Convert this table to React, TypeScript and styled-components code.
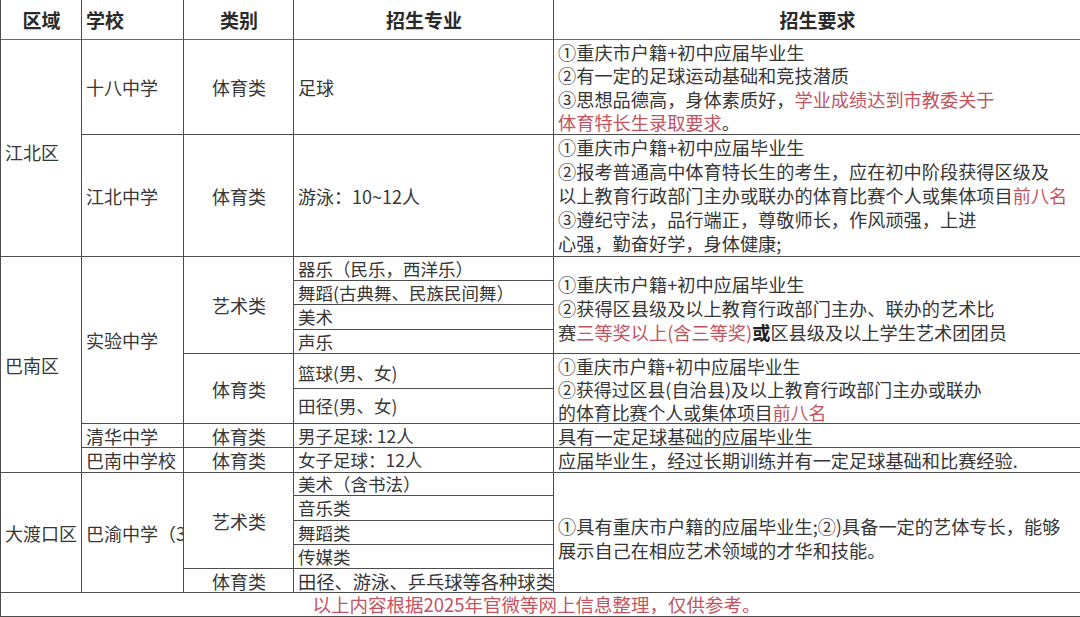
import React from 'react';
import styled, { createGlobalStyle } from 'styled-components';

const GlobalStyle = createGlobalStyle`
  html, body {
    margin: 0;
    padding: 0;
    background: #ffffff;
  }
  body {
    font-family: "Noto Sans CJK SC", "Noto Sans", sans-serif;
    color: #333333;
  }
`;

const ROW_HEIGHTS = [40, 95, 122, 24, 24, 25, 24, 35, 35, 24, 25, 23, 25, 24, 24, 24, 24];

const Sheet = styled.div`
  display: grid;
  width: 1080px;
  height: 617px;
  box-sizing: border-box;
  grid-template-columns: 81px 102px 110px 260px 1fr;
  grid-template-rows: ${ROW_HEIGHTS.map((h) => `${h}px`).join(' ')};
  border-left: 1px solid #4d4d4d;
  background: #ffffff;
  overflow: hidden;
`;

type CellProps = {
  $rows?: number;
  $align?: 'left' | 'center';
  $valign?: 'top' | 'center';
  $size?: number;
  $lh?: number;
  $last?: boolean;
  $pad?: number;
};

const Cell = styled.div<CellProps>`
  grid-row: span ${(p) => p.$rows ?? 1};
  display: flex;
  flex-direction: column;
  justify-content: ${(p) => (p.$valign === 'top' ? 'flex-start' : 'center')};
  align-items: ${(p) => (p.$align === 'center' ? 'center' : 'flex-start')};
  box-sizing: border-box;
  padding: ${(p) => p.$pad ?? 0}px 3px 0 4px;
  border-right: ${(p) => (p.$last ? 'none' : '1px solid #4d4d4d')};
  border-bottom: 1px solid #4d4d4d;
  font-size: ${(p) => p.$size ?? 18}px;
  line-height: ${(p) => p.$lh ?? 24}px;
  color: #363636;
  white-space: nowrap;
  overflow: hidden;
  min-width: 0;
`;

const HeadCell = styled(Cell)`
  font-weight: 700;
  font-size: 19px;
  color: #2a2a2a;
  border-bottom-color: #6a6a6a;
`;

const Requirement = styled(Cell)`
  font-size: ${(p) => p.$size ?? 18.2}px;
`;

const Line = styled.div`
  white-space: nowrap;
`;

const Red = styled.span`
  color: #c2545f;
`;

const Strong = styled.span`
  font-weight: 700;
  color: #1f1f1f;
`;

const Footer = styled.div`
  grid-column: span 5;
  display: flex;
  align-items: center;
  justify-content: center;
  padding-right: 8px;
  border-bottom: 1px solid #4d4d4d;
  font-size: 18.5px;
  line-height: 23px;
  color: #c2545f;
  white-space: nowrap;
`;

const App: React.FC = () => (
  <>
    <GlobalStyle />
    <Sheet>
      <HeadCell $align="center">区域</HeadCell>
      <HeadCell>学校</HeadCell>
      <HeadCell $align="center">类别</HeadCell>
      <HeadCell $align="center">招生专业</HeadCell>
      <HeadCell $align="center" $last>
        招生要求
      </HeadCell>

      <Cell $rows={2} $pad={8}>江北区</Cell>
      <Cell>十八中学</Cell>
      <Cell $align="center">体育类</Cell>
      <Cell>足球</Cell>
      <Requirement $valign="top" $pad={1} $lh={23.4} $last>
        <Line>①重庆市户籍+初中应届毕业生</Line>
        <Line>②有一定的足球运动基础和竞技潜质</Line>
        <Line>
          ③思想品德高，身体素质好，<Red>学业成绩达到市教委关于</Red>
        </Line>
        <Line>
          <Red>体育特长生录取要求</Red>。
        </Line>
      </Requirement>

      <Cell>江北中学</Cell>
      <Cell $align="center">体育类</Cell>
      <Cell>游泳：10~12人</Cell>
      <Requirement $valign="top" $lh={24.1} $last>
        <Line>①重庆市户籍+初中应届毕业生</Line>
        <Line>②报考普通高中体育特长生的考生，应在初中阶段获得区级及</Line>
        <Line>
          以上教育行政部门主办或联办的体育比赛个人或集体项目<Red>前八名</Red>
        </Line>
        <Line>③遵纪守法，品行端正，尊敬师长，作风顽强，上进</Line>
        <Line>心强，勤奋好学，身体健康;</Line>
      </Requirement>

      <Cell $rows={8}>巴南区</Cell>
      <Cell $rows={6}>实验中学</Cell>
      <Cell $rows={4} $align="center">艺术类</Cell>
      <Cell $size={17.5}>器乐（民乐，西洋乐）</Cell>
      <Requirement $rows={4} $pad={5} $last>
        <Line>①重庆市户籍+初中应届毕业生</Line>
        <Line>②获得区县级及以上教育行政部门主办、联办的艺术比</Line>
        <Line>
          赛<Red>三等奖以上(含三等奖)</Red>
          <Strong>或</Strong>区县级及以上学生艺术团团员
        </Line>
      </Requirement>
      <Cell $size={17.5}>舞蹈(古典舞、民族民间舞）</Cell>
      <Cell $size={17.5}>美术</Cell>
      <Cell $size={17.5}>声乐</Cell>

      <Cell $rows={2} $align="center">体育类</Cell>
      <Cell $size={17.5} $pad={4}>篮球(男、女)</Cell>
      <Requirement $rows={2} $valign="top" $pad={1} $size={17.9} $lh={23} $last>
        <Line>①重庆市户籍+初中应届毕业生</Line>
        <Line>②获得过区县(自治县)及以上教育行政部门主办或联办</Line>
        <Line>
          的体育比赛个人或集体项目<Red>前八名</Red>
        </Line>
      </Requirement>
      <Cell $size={17.5}>田径(男、女)</Cell>

      <Cell>清华中学</Cell>
      <Cell $align="center">体育类</Cell>
      <Cell $size={17.5}>男子足球: 12人</Cell>
      <Requirement $last>具有一定足球基础的应届毕业生</Requirement>

      <Cell>巴南中学校</Cell>
      <Cell $align="center">体育类</Cell>
      <Cell $size={17.5}>女子足球：12人</Cell>
      <Requirement $last>应届毕业生，经过长期训练并有一定足球基础和比赛经验.</Requirement>

      <Cell $rows={5}>大渡口区</Cell>
      <Cell $rows={5}>巴渝中学（3</Cell>
      <Cell $rows={4} $align="center">艺术类</Cell>
      <Cell $size={17.5} $lh={22}>美术（含书法）</Cell>
      <Requirement $rows={5} $pad={10} $last>
        <Line>①具有重庆市户籍的应届毕业生;②)具备一定的艺体专长，能够</Line>
        <Line>展示自己在相应艺术领域的才华和技能。</Line>
      </Requirement>
      <Cell $size={17.5}>音乐类</Cell>
      <Cell $size={17.5}>舞蹈类</Cell>
      <Cell $size={17.5}>传媒类</Cell>
      <Cell $align="center">体育类</Cell>
      <Cell $size={18.3}>田径、游泳、乒乓球等各种球类</Cell>

      <Footer>以上内容根据2025年官微等网上信息整理，仅供参考。</Footer>
    </Sheet>
  </>
);

export default App;
